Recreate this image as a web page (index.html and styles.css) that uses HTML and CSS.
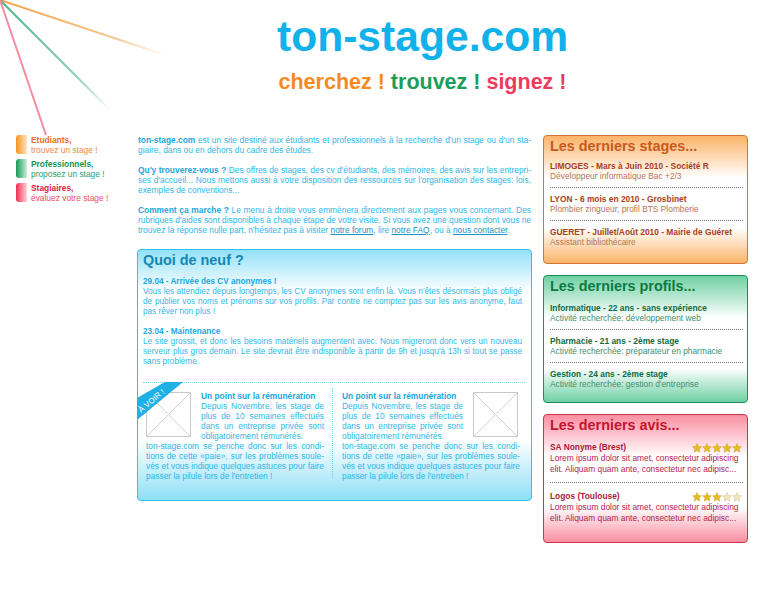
FILE: index.html
```html
<!DOCTYPE html>
<html lang="fr">

<head>
    <meta charset="UTF-8">
    <meta name="viewport" content="width=device-width, initial-scale=1.0">
    <title>ton-stage.com</title>
    <link rel="stylesheet" href="styles.css">
</head>

<body>
    <!-- rays in the top corner -->
    <svg class="rays" width="170" height="140" viewBox="0 0 170 140">
        <defs>
            <linearGradient id="rayOrange" gradientUnits="userSpaceOnUse" x1="0" y1="0" x2="165" y2="55">
                <stop offset="0" stop-color="#f4a24a" />
                <stop offset="0.7" stop-color="#f7c78f" />
                <stop offset="1" stop-color="#ffffff" />
            </linearGradient>
            <linearGradient id="rayGreen" gradientUnits="userSpaceOnUse" x1="0" y1="0" x2="110" y2="110">
                <stop offset="0" stop-color="#4cb388" />
                <stop offset="0.7" stop-color="#8fd0b2" />
                <stop offset="1" stop-color="#ffffff" />
            </linearGradient>
        </defs>
        <line x1="0" y1="0" x2="165" y2="55" stroke="url(#rayOrange)" stroke-width="2" />
        <line x1="0" y1="0" x2="110" y2="110" stroke="url(#rayGreen)" stroke-width="2" />
        <line x1="0" y1="0" x2="46" y2="135" stroke="#f58ca0" stroke-width="2" />
    </svg>

    <div class="header">
        <h1>ton-stage.com</h1>
        <p class="slogan"><span class="orange">cherchez !</span> <span class="green">trouvez !</span> <span class="red">signez !</span></p>
    </div>

    <div class="main">
        <ul class="nav">
            <li class="nav-orange"><i></i><a><b>Etudiants,</b><br>trouvez un stage !</a></li>
            <li class="nav-green"><i></i><a><b>Professionnels,</b><br>proposez un stage !</a></li>
            <li class="nav-red"><i></i><a><b>Stagiaires,</b><br>évaluez votre stage !</a></li>
        </ul>

        <div class="center">
            <div class="intro">
                <p><b>ton-stage.com</b> est un site destiné aux étudiants et professionnels à la recherche d'un stage ou d'un sta&shy;giaire, dans ou en dehors du cadre des études.</p>
                <p><b>Qu'y trouverez-vous ?</b> Des offres de stages, des cv d'étudiants, des mémoires, des avis sur les entrepri&shy;ses d'accueil... Nous mettons aussi à votre disposition des ressources sur l'organisation des stages: lois, exemples de conventions...</p>
                <p><b>Comment ça marche ?</b> Le menu à droite vous emmènera directement aux pages vous concernant. Des rubriques d'aides sont disponibles à chaque étape de votre visite. Si vous avez une question dont vous ne trouvez la réponse nulle part, n'hésitez pas à visiter <u>notre forum</u>, lire <u>notre FAQ</u>, ou à <u>nous contacter</u>.</p>
            </div>

            <div class="news">
                <h2>Quoi de neuf ?</h2>
                <p><b>29.04 - Arrivée des CV anonymes !</b><br>Vous les attendiez depuis longtemps, les CV anonymes sont enfin là. Vous n'êtes désormais plus obligé de publier vos noms et prénoms sur vos profils. Par contre ne comptez pas sur les avis anonyme, faut pas rêver non plus !</p>
                <p><b>23.04 - Maintenance</b><br>Le site grossit, et donc les besoins matériels augmentent avec. Nous migreront donc vers un nouveau serveur plus gros demain. Le site devrait être indisponible à partir de 9h et jusqu'à 13h si tout se passe sans problème.</p>

                <div class="articles">
                    <svg class="ribbon" width="46" height="40" viewBox="0 0 46 40">
                        <polygon points="0,16 28,0 46,0 0,38" fill="#1fb0e6" />
                        <text x="0" y="0" transform="translate(4 31) rotate(-40)">À VOIR !</text>
                    </svg>
                    <div class="article">
                        <svg class="thumb thumb-left" width="45" height="45" viewBox="0 0 45 45">
                            <rect x="0.5" y="0.5" width="44" height="44" />
                            <path d="M0 0L45 45M45 0L0 45" />
                        </svg>
                        <p><b>Un point sur la rémunération</b><br>Depuis Novembre, les stage de plus de 10 semaines effectués dans un entreprise privée sont obligatoirement rémunérés.<br>ton-stage.com se penche donc sur les condi&shy;tions de cette «paie», sur les problèmes soule&shy;vés et vous indique quelques astuces pour faire passer la pilule lors de l'entretien !</p>
                    </div>
                    <div class="article article-right">
                        <svg class="thumb thumb-right" width="45" height="45" viewBox="0 0 45 45">
                            <rect x="0.5" y="0.5" width="44" height="44" />
                            <path d="M0 0L45 45M45 0L0 45" />
                        </svg>
                        <p><b>Un point sur la rémunération</b><br>Depuis Novembre, les stage de plus de 10 semaines effectués dans un entreprise privée sont obligatoirement rémunérés.<br>ton-stage.com se penche donc sur les condi&shy;tions de cette «paie», sur les problèmes soule&shy;vés et vous indique quelques astuces pour faire passer la pilule lors de l'entretien !</p>
                    </div>
                </div>
            </div>
        </div>

        <div class="side">
            <div class="box box-orange">
                <h2>Les derniers stages...</h2>
                <div class="item"><b>LIMOGES - Mars à Juin 2010 - Société R</b><br>Développeur informatique Bac +2/3</div>
                <div class="item"><b>LYON - 6 mois en 2010 - Grosbinet</b><br>Plombier zingueur, profil BTS Plomberie</div>
                <div class="item"><b>GUERET - Juillet/Août 2010 - Mairie de Guéret</b><br>Assistant bibliothécaire</div>
            </div>

            <div class="box box-green">
                <h2>Les derniers profils...</h2>
                <div class="item"><b>Informatique - 22 ans - sans expérience</b><br>Activité recherchée: développement web</div>
                <div class="item"><b>Pharmacie - 21 ans - 2ème stage</b><br>Activité recherchée: préparateur en pharmacie</div>
                <div class="item"><b>Gestion - 24 ans - 2ème stage</b><br>Activité recherchée: gestion d'entreprise</div>
            </div>

            <div class="box box-red">
                <h2>Les derniers avis...</h2>
                <div class="item">
                    <div class="review-head">
                        <b>SA Nonyme (Brest)</b>
                        <svg class="stars" width="50" height="10" viewBox="0 0 50 10">
                            <path id="star" class="on" d="M5 0.5L6.3 3.4L9.5 3.8L7.1 5.9L7.8 9.2L5 7.5L2.2 9.2L2.9 5.9L0.5 3.8L3.7 3.4Z" />
                            <use href="#star" x="10" />
                            <use href="#star" x="20" />
                            <use href="#star" x="30" />
                            <use href="#star" x="40" />
                        </svg>
                    </div>
                    Lorem ipsum dolor sit amet, consectetur adipiscing elit. Aliquam quam ante, consectetur nec adipisc...
                </div>
                <div class="item">
                    <div class="review-head">
                        <b>Logos (Toulouse)</b>
                        <svg class="stars" width="50" height="10" viewBox="0 0 50 10">
                            <path id="star2" class="on" d="M5 0.5L6.3 3.4L9.5 3.8L7.1 5.9L7.8 9.2L5 7.5L2.2 9.2L2.9 5.9L0.5 3.8L3.7 3.4Z" />
                            <use href="#star2" x="10" />
                            <use href="#star2" x="20" />
                            <path class="off" transform="translate(30 0)" d="M5 0.5L6.3 3.4L9.5 3.8L7.1 5.9L7.8 9.2L5 7.5L2.2 9.2L2.9 5.9L0.5 3.8L3.7 3.4Z" />
                            <path class="off" transform="translate(40 0)" d="M5 0.5L6.3 3.4L9.5 3.8L7.1 5.9L7.8 9.2L5 7.5L2.2 9.2L2.9 5.9L0.5 3.8L3.7 3.4Z" />
                        </svg>
                    </div>
                    Lorem ipsum dolor sit amet, consectetur adipiscing elit. Aliquam quam ante, consectetur nec adipisc...
                </div>
            </div>
        </div>
    </div>
</body>

</html>
```
FILE: styles.css
```css
* {
    box-sizing: border-box;
    margin: 0;
    padding: 0;
}

body {
    font-family: 'Liberation Sans', Arial, sans-serif;
    font-size: 8.4px;
    line-height: 10px;
    background-color: #fff;
    color: #2fb8ea;
    position: relative;
    height: 600px;
    overflow: hidden;
}

.rays {
    position: absolute;
    top: 0;
    left: 0;
}

/* ---header--- */
.header {
    height: 135px;
    padding-left: 80px;
    text-align: center;
}

.header h1 {
    font-size: 42.6px;
    line-height: 48px;
    padding-top: 12px;
    color: #12b1ea;
}

.slogan {
    font-size: 21.5px;
    line-height: 24px;
    font-weight: bold;
    padding-top: 10px;
}

.orange {
    color: #f58a1f;
}

.green {
    color: #1b9e58;
}

.red {
    color: #ee3a5c;
}

/* ---columns--- */
.main {
    display: flex;
    align-items: flex-start;
    padding-left: 16px;
}

.nav {
    width: 121px;
    flex: none;
    list-style: none;
}

.nav li {
    display: flex;
    gap: 4px;
    height: 19px;
    margin-bottom: 5px;
}

.nav i {
    width: 11px;
    height: 19px;
    border-radius: 3px 0 0 3px;
}

.nav-orange i {
    background: linear-gradient(to right, #f7931e, #fde3c4);
}

.nav-orange a {
    color: #f0893b;
}

.nav-orange b {
    color: #ea6a26;
}

.nav-green i {
    background: linear-gradient(to right, #149a55, #c9eeda);
}

.nav-green a {
    color: #2f9f68;
}

.nav-green b {
    color: #12934f;
}

.nav-red i {
    background: linear-gradient(to right, #ee2f50, #fdd3dc);
}

.nav-red a {
    color: #ee4a68;
}

.nav-red b {
    color: #e3203f;
}

.center {
    width: 395px;
    flex: none;
}

.intro {
    padding: 0 1px;
    text-align: justify;
}

.intro p {
    margin-bottom: 10px;
}

.intro u {
    color: #1b93c4;
}

.intro b {
    color: #1ba8dc;
}

/* ---news box--- */
.news {
    margin-top: 14px;
    height: 252px;
    padding: 0 6px 0 5px;
    border: 1px solid #2fc0ee;
    border-radius: 4px;
    background: linear-gradient(to bottom, #93e1f8 0, #ffffff 42px, #ffffff 190px, #8fdff7 100%);
    text-align: justify;
}

.news h2 {
    font-size: 14.4px;
    line-height: 20px;
    height: 27px;
    color: #1487b4;
    text-align: left;
}

.news > p {
    font-size: 8.2px;
    margin-bottom: 10px;
    margin-right: 3px;
}

.news b {
    color: #19a9df;
}

.articles {
    display: flex;
    position: relative;
    gap: 18px;
    margin-top: 15px;
    padding: 8px 0 0 3px;
    border-top: 1px dotted #76d3f0;
}

.ribbon {
    position: absolute;
    top: -1px;
    left: -6px;
    z-index: 1;
}

.ribbon text {
    font-family: 'Liberation Sans', Arial, sans-serif;
    font-size: 8px;
    fill: #fff;
}

.article {
    width: 178px;
    flex: none;
    height: 90px;
    position: relative;
}

.article-right::before {
    content: "";
    position: absolute;
    left: -10px;
    top: -3px;
    height: 90px;
    border-left: 1px dotted #76d3f0;
}

.thumb {
    margin-top: 1px;
}

.thumb rect {
    fill: #fff;
    stroke: #c9c9c9;
}

.thumb path {
    stroke: #d2d2d2;
    fill: none;
}

.thumb-left {
    float: left;
    margin-right: 10px;
}

.thumb-right {
    float: right;
    margin-left: 10px;
    margin-right: 2px;
}

/* ---right column--- */
.side {
    width: 205px;
    flex: none;
    margin-left: 11px;
}

.box {
    height: 129px;
    margin-bottom: 11px;
    padding: 0 4px 0 6px;
    border: 1px solid;
    border-radius: 4px;
}

.box h2 {
    font-size: 14.4px;
    line-height: 20px;
    height: 25px;
}

.item {
    padding-bottom: 6px;
    margin-bottom: 6px;
    border-bottom: 1px dotted #777;
}

.item:last-child {
    border-bottom: 0;
}

.box-orange {
    border-color: #d4763a;
    background: linear-gradient(to bottom, #fbb469 0, #ffffff 42px, #ffffff 92px, #fbb469 100%);
    color: #b6745a;
}

.box-orange h2 {
    color: #c85a1c;
}

.box-orange b {
    color: #a9401c;
}

.box-green {
    height: 128px;
    border-color: #1f8f5a;
    background: linear-gradient(to bottom, #6fd0a4 0, #ffffff 42px, #ffffff 92px, #6fd0a4 100%);
    color: #3d8f70;
}

.box-green h2 {
    height: 27px;
    color: #0d7a43;
}

.box-green b {
    color: #126b40;
}

.box-red {
    border-color: #d1344d;
    background: linear-gradient(to bottom, #fb8fa2 0, #ffffff 42px, #ffffff 92px, #fb8fa2 100%);
    color: #b3234c;
}

.box-red h2 {
    height: 27px;
    color: #c5142f;
}

.box-red b {
    color: #a81a36;
}

.box-red .item {
    line-height: 10.5px;
    padding-bottom: 8px;
    margin-bottom: 8px;
}

.review-head {
    display: flex;
    justify-content: space-between;
    align-items: center;
    height: 11px;
    padding-right: 1px;
}

.stars .on {
    fill: #e8bd1e;
    stroke: #b8982a;
    stroke-width: 0.4;
}

.stars .off {
    fill: #f3e7bd;
    stroke: #c0b68c;
    stroke-width: 0.4;
}
```
